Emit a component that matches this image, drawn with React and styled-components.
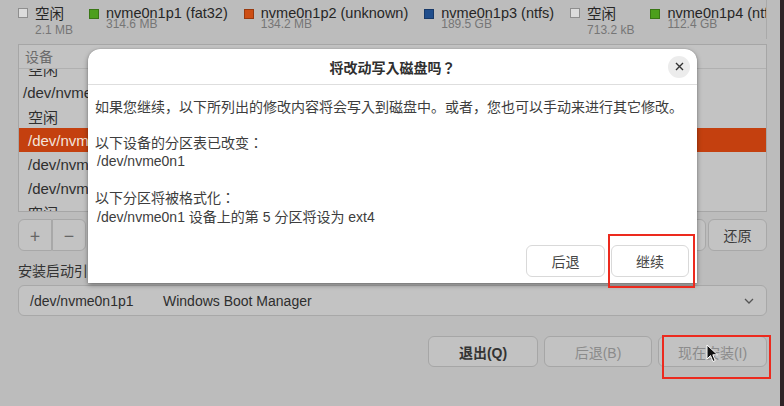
import React from 'react';
import styled, { createGlobalStyle } from 'styled-components';

const Global = createGlobalStyle`
  html, body { margin: 0; padding: 0; background: #bcbcbc; }
  body { font-family: "Liberation Sans", "Noto Sans CJK JP", sans-serif; }
  * { box-sizing: border-box; }
`;

const CJK = `"Noto Sans CJK JP", "Liberation Sans", sans-serif`;

const Frame = styled.div`
  position: relative;
  width: 784px;
  height: 406px;
  overflow: hidden;
  background: #bcbcbc;
  border-right: 4px solid #2f2427;
  padding: 0 13px 0 18px;
  display: flex;
  flex-direction: column;
`;

/* ---------- partition legend ---------- */
const Legend = styled.div`
  height: 39px;
  margin-bottom: 5px;
  display: flex;
  gap: 16px;
  overflow: hidden;
  white-space: nowrap;
  border-right: 1px solid #a9a9a9;
`;
const LegendItem = styled.div`
  display: flex;
  align-items: flex-start;
  flex-shrink: 0;
`;
const Swatch = styled.span`
  width: 10px;
  height: 10px;
  margin-top: ${p => (p.$empty ? 8 : 9)}px;
  margin-right: 7px;
  flex-shrink: 0;
  background: ${p => p.$color || '#dcdcdc'};
  border: 1px solid ${p => (p.$empty ? '#8e8e8e' : 'rgba(0,0,0,0.25)')};
`;
const LegendText = styled.div`
  display: flex;
  flex-direction: column;
  padding-top: 5px;
`;
const LegendName = styled.span`
  font-size: 14.5px;
  line-height: 16px;
  color: #262626;
  font-family: ${p => (p.$free ? CJK : 'inherit')};
`;
const LegendSize = styled.span`
  font-size: 12px;
  line-height: 13px;
  color: #767676;
  margin-top: ${p => (p.$free ? 3 : -3)}px;
`;

/* ---------- device list ---------- */
const DeviceBox = styled.div`
  height: 168px;
  border: 1px solid #a6a6a6;
  background: #c3c3c3;
  display: flex;
  flex-direction: column;
`;
const DeviceHeader = styled.div`
  height: 24px;
  flex-shrink: 0;
  padding-left: 6px;
  font-size: 14px;
  line-height: 23px;
  color: #6b6b6b;
  font-family: ${CJK};
  border-bottom: 1px solid #b0b0b0;
`;
const RowsViewport = styled.div`
  flex: 1;
  overflow: hidden;
`;
const RowsScroll = styled.div`
  margin-top: -13px;
`;
const Row = styled.div`
  height: 24px;
  display: flex;
  align-items: center;
  gap: 40px;
  padding-left: ${p => (p.$device ? 4 : 9)}px;
  font-size: 15px;
  white-space: nowrap;
  color: ${p => (p.$selected ? '#f3e4dc' : '#2e2e2e')};
  background: ${p => (p.$selected ? '#c4400f' : 'transparent')};
`;

/* ---------- toolbar ---------- */
const Toolbar = styled.div`
  margin-top: 7px;
  height: 32px;
  display: flex;
  justify-content: space-between;
`;
const Group = styled.div`
  display: flex;
  gap: ${p => p.$gap || 0}px;
`;
const ToolButton = styled.div`
  width: ${p => p.$w}px;
  height: 32px;
  display: flex;
  align-items: center;
  justify-content: center;
  background: #c3c3c3;
  border: 1px solid #a8a8a8;
  border-radius: ${p => p.$radius || '6px'};
  font-size: ${p => p.$fs || 14}px;
  font-family: ${CJK};
  color: ${p => p.$color || '#3a3a3a'};
`;

const Label = styled.div`
  margin-top: 9px;
  font-size: 14px;
  line-height: 20px;
  color: #333;
  font-family: ${CJK};
`;

const Combo = styled.div`
  margin-top: 5px;
  height: 31px;
  border: 1px solid #a8a8a8;
  border-radius: 6px;
  background: #c3c3c3;
  display: flex;
  align-items: center;
  padding: 0 12px 0 11px;
  font-size: 14px;
  color: #2e2e2e;
`;
const ComboCell = styled.span`
  width: ${p => p.$w || 'auto'};
  flex: ${p => (p.$grow ? 1 : 'none')};
`;

const Actions = styled.div`
  margin-top: 20px;
  display: flex;
  justify-content: flex-end;
  gap: 6px;
`;
const ActionButton = styled.div`
  width: ${p => p.$w}px;
  height: 31px;
  display: flex;
  align-items: center;
  justify-content: center;
  background: #c2c2c2;
  border: 1px solid #a6a6a6;
  border-radius: 6px;
  font-size: 14px;
  font-weight: ${p => (p.$active ? 'bold' : 'normal')};
  color: ${p => (p.$active ? '#333' : '#8b8b8b')};
`;

/* ---------- dialog ---------- */
const Dialog = styled.div`
  position: absolute;
  left: 88px;
  top: 49px;
  width: 609px;
  height: 234px;
  background: #fff;
  border-radius: 12px 12px 0 0;
  box-shadow: 0 2px 5px rgba(0, 0, 0, 0.4), 0 0 1px rgba(0, 0, 0, 0.3);
  display: flex;
  flex-direction: column;
`;
const TitleBar = styled.div`
  height: 36px;
  flex-shrink: 0;
  border-bottom: 1px solid #dedede;
  display: grid;
  grid-template-columns: 1fr auto 1fr;
  align-items: center;
`;
const Title = styled.div`
  grid-column: 2;
  font-size: 14px;
  font-weight: bold;
  font-family: ${CJK};
  color: #2f2f2f;
`;
const CloseButton = styled.div`
  grid-column: 3;
  justify-self: end;
  margin-right: 7px;
  width: 22px;
  height: 22px;
  border-radius: 50%;
  background: #ececec;
  display: flex;
  align-items: center;
  justify-content: center;
`;
const Body = styled.div`
  flex: 1;
  display: flex;
  flex-direction: column;
  padding: 12px 8px 6px 7px;
  font-size: 14px;
  line-height: 19px;
  color: #3d3d3d;
`;
const Para = styled.div`
  margin-bottom: 17px;
  white-space: nowrap;
`;
const Zh = styled.div`
  font-family: ${CJK};
  line-height: 19px;
`;
const Mono = styled.div`
  padding-left: 2px;
  margin-top: ${p => p.$gap || 0}px;
`;
const DialogButtons = styled.div`
  margin-top: auto;
  display: flex;
  justify-content: flex-end;
  gap: 6px;
`;
const DialogButton = styled.div`
  width: ${p => p.$w}px;
  height: 32px;
  border: 1px solid #d9d9d9;
  border-radius: 6px;
  background: #fff;
  display: flex;
  align-items: center;
  justify-content: center;
  font-size: 14px;
  font-family: ${CJK};
  color: #454545;
`;

/* ---------- annotations ---------- */
const Mark = styled.div`
  position: absolute;
  left: ${p => p.$x}px;
  top: ${p => p.$y}px;
  width: ${p => p.$w}px;
  height: ${p => p.$h}px;
  border: 2px solid #ec2a1e;
  pointer-events: none;
`;
const Pointer = styled.svg`
  position: absolute;
  left: 706px;
  top: 344px;
`;

const legend = [
  { name: '空闲', size: '2.1 MB', free: true },
  { name: 'nvme0n1p1 (fat32)', size: '314.6 MB', color: '#4c9f1c' },
  { name: 'nvme0n1p2 (unknown)', size: '134.2 MB', color: '#cd4e14' },
  { name: 'nvme0n1p3 (ntfs)', size: '189.5 GB', color: '#1f4d8c' },
  { name: '空闲', size: '713.2 kB', free: true },
  { name: 'nvme0n1p4 (ntfs)', size: '112.4 GB', color: '#4c9f1c' },
];

const rows = [
  { dev: '空闲', type: '', size: '2 MB' },
  { dev: '/dev/nvme0n1', device: true },
  { dev: '空闲', type: '', size: '2 MB' },
  { dev: '/dev/nvme0n1p5', type: 'ext4', size: '256000 MB', selected: true },
  { dev: '/dev/nvme0n1p1', type: 'efi', size: '314 MB' },
  { dev: '/dev/nvme0n1p2', type: '', size: '134 MB' },
  { dev: '空闲', type: '', size: '1 MB' },
];

export default function App() {
  return (
    <>
      <Global />
      <Frame>
        <Legend>
          {legend.map((l, i) => (
            <LegendItem key={i}>
              <Swatch $color={l.color} $empty={l.free} />
              <LegendText>
                <LegendName $free={l.free}>{l.name}</LegendName>
                <LegendSize $free={l.free}>{l.size}</LegendSize>
              </LegendText>
            </LegendItem>
          ))}
        </Legend>

        <DeviceBox>
          <DeviceHeader>设备</DeviceHeader>
          <RowsViewport>
            <RowsScroll>
              {rows.map((r, i) => (
                <Row key={i} $device={r.device} $selected={r.selected}>
                  <span>{r.dev}</span>
                  {r.type !== undefined && <span>{r.type}</span>}
                  {r.size && <span>{r.size}</span>}
                </Row>
              ))}
            </RowsScroll>
          </RowsViewport>
        </DeviceBox>

        <Toolbar>
          <Group>
            <ToolButton $w={34} $radius="6px 0 0 6px" $fs={18} $color="#666">+</ToolButton>
            <ToolButton $w={34} $radius="0 6px 6px 0" $fs={18} $color="#666">−</ToolButton>
          </Group>
          <Group $gap={2}>
            <ToolButton $w={70}>更改…</ToolButton>
            <ToolButton $w={59}>还原</ToolButton>
          </Group>
        </Toolbar>

        <Label>安装启动引导器的设备：</Label>
        <Combo>
          <ComboCell $w="133px">/dev/nvme0n1p1</ComboCell>
          <ComboCell $grow>Windows Boot Manager</ComboCell>
          <svg width="10" height="6" viewBox="0 0 10 6">
            <path d="M1 1 L5 5 L9 1" fill="none" stroke="#555" strokeWidth="1.3" />
          </svg>
        </Combo>

        <Actions>
          <ActionButton $w={110} $active>退出(Q)</ActionButton>
          <ActionButton $w={108}>后退(B)</ActionButton>
          <ActionButton $w={109}>现在安装(I)</ActionButton>
        </Actions>

        <Dialog>
          <TitleBar>
            <Title>将改动写入磁盘吗？</Title>
            <CloseButton>
              <svg width="9" height="9" viewBox="0 0 9 9">
                <path d="M1 1 L8 8 M8 1 L1 8" stroke="#333" strokeWidth="1.4" />
              </svg>
            </CloseButton>
          </TitleBar>
          <Body>
            <Para>
              <Zh>如果您继续，以下所列出的修改内容将会写入到磁盘中。或者，您也可以手动来进行其它修改。</Zh>
            </Para>
            <Para>
              <Zh>以下设备的分区表已改变：</Zh>
              <Mono>/dev/nvme0n1</Mono>
            </Para>
            <Para>
              <Zh>以下分区将被格式化：</Zh>
              <Mono $gap={1}>/dev/nvme0n1 设备上的第 5 分区将设为 ext4</Mono>
            </Para>
            <DialogButtons>
              <DialogButton $w={79}>后退</DialogButton>
              <DialogButton $w={78}>继续</DialogButton>
            </DialogButtons>
          </Body>
        </Dialog>

        <Mark $x={608} $y={234} $w={87} $h={54} />
        <Mark $x={662} $y={335} $w={109} $h={44} />
        <Pointer width="13" height="19" viewBox="0 0 13 19">
          <path d="M1 1 L1 15 L4.5 11.5 L7 17.5 L9.2 16.5 L6.8 10.8 L11.5 10.8 Z" fill="#111" stroke="#fff" strokeWidth="1" />
        </Pointer>
      </Frame>
    </>
  );
}
